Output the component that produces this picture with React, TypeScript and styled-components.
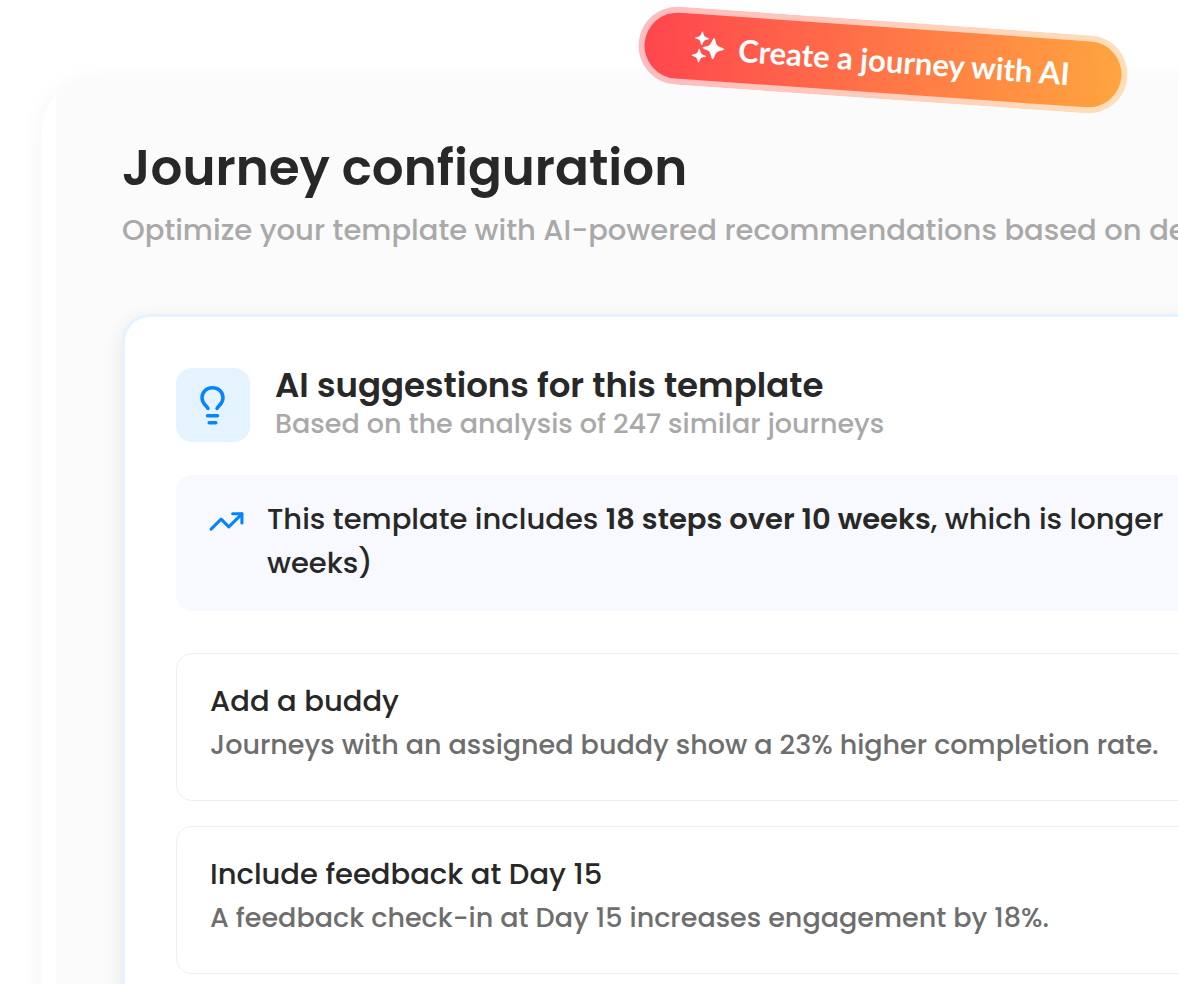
import React from "react";
import styled, { createGlobalStyle } from "styled-components";
import { TrendingUp } from "lucide-react";

const GlobalStyle = createGlobalStyle`
  *, *::before, *::after { box-sizing: border-box; }
  body {
    margin: 0;
    background: #ffffff;
    color: #282828;
    font-family: Poppins, Inter, sans-serif;
  }
  h1, h2, h3, p, ul { margin: 0; padding: 0; }
`;

const Page = styled.div`
  position: relative;
  height: 100vh;
  overflow: hidden;
  padding: 76px 0 0 42px;
`;

const Panel = styled.main`
  min-height: 100%;
  margin-right: -60px;
  padding-left: 14px;
  border-radius: 56px 0 0 0;
  background: linear-gradient(to right, #ffffff 14px, #fbfbfb 14px);
  box-shadow: 0 6px 28px rgba(0, 0, 0, 0.05);
`;

const Content = styled.div`
  padding: 59px 0 0 66px;
  white-space: nowrap;
`;

const Title = styled.h1`
  font-size: 50px;
  line-height: 66px;
  font-weight: 600;
`;

const Subtitle = styled.p`
  margin-top: 7px;
  font-size: 29px;
  line-height: 44px;
  font-weight: 500;
  color: #a9a9a9;
`;

const Card = styled.section`
  margin-top: 62px;
  padding: 51px 0 60px 51px;
  border: 3px solid #e4f3ff;
  border-radius: 28px;
  background: #ffffff;
  box-shadow: 0 6px 20px rgba(0, 0, 0, 0.09);
`;

const CardHeader = styled.header`
  display: flex;
  align-items: flex-start;
  gap: 25px;
`;

const IconTile = styled.div`
  display: flex;
  align-items: center;
  justify-content: center;
  width: 74px;
  height: 74px;
  border-radius: 16px;
  background: #e4f3ff;
  color: #0584fe;
`;

const CardTitle = styled.h2`
  font-size: 34px;
  line-height: 34px;
  font-weight: 600;
`;

const CardSubtitle = styled.p`
  font-size: 27px;
  line-height: 44px;
  font-weight: 500;
  color: #a9a9a9;
`;

const Callout = styled.div`
  display: flex;
  gap: 22px;
  margin-top: 29px;
  padding: 22px 0 26px 32px;
  border-radius: 16px 0 0 16px;
  background: #f7f9fe;
`;

const TrendIcon = styled(TrendingUp)`
  flex: none;
  margin-top: 6px;
  color: #0584fe;
`;

const CalloutText = styled.p`
  font-size: 29px;
  line-height: 44px;
  font-weight: 500;

  strong { font-weight: 600; }
`;

const Suggestions = styled.ul`
  display: flex;
  flex-direction: column;
  gap: 25px;
  margin-top: 42px;
  list-style: none;
`;

const Suggestion = styled.li`
  padding: 25px 0 33px 33px;
  border: 1px solid #efefef;
  border-radius: 16px;
`;

const SuggestionTitle = styled.h3`
  font-size: 29px;
  line-height: 44px;
  font-weight: 500;
`;

const SuggestionText = styled.p`
  font-size: 27px;
  line-height: 44px;
  font-weight: 500;
  color: #6e6e6e;
`;

const CreateButton = styled.button`
  position: absolute;
  top: 21px;
  right: 50px;
  display: flex;
  align-items: center;
  gap: 13px;
  width: 490px;
  height: 78px;
  padding: 0 0 0 47px;
  border: 6px solid rgba(255, 255, 255, 0.64);
  border-radius: 39px;
  background: linear-gradient(to right, #ff444f, #ffa63f) border-box;
  color: #ffffff;
  font-family: Lato, sans-serif;
  font-size: 31px;
  font-weight: 700;
  white-space: nowrap;
  transform: rotate(4deg);
`;

const suggestions = [
  { title: "Add a buddy", text: "Journeys with an assigned buddy show a 23% higher completion rate." },
  { title: "Include feedback at Day 15", text: "A feedback check-in at Day 15 increases engagement by 18%." },
];

const Sparkles = () => (
  <svg width="34" height="34" viewBox="0 0 34 34" fill="currentColor" aria-hidden="true">
    <path d="M22 6.500Q23.500 8 24 11Q25 14.500 28.500 15.500Q32 16.200 33 17.300Q32 18.500 28.500 19.300Q25 20.300 24 24Q23.500 27 22 28.500Q20.500 27 19.800 24Q18.800 20.300 15.500 19.300Q12 18.500 11 17.300Q12 16.200 15.500 15.500Q18.800 14.500 19.800 11Q20.500 8 22 6.500Z" />
    <path d="M10 .8Q11 2 11.300 4Q12 6.200 14 6.700Q16.500 7.200 17.300 8Q16.500 8.800 14 9.300Q12 9.900 11.300 12Q11 14 10 15.200Q9 14 8.700 12Q8 9.900 6 9.300Q3.500 8.800 2.700 8Q3.500 7.200 6 6.700Q8 6.200 8.700 4Q9 2 10 .8Z" />
    <path d="M8 18.300Q9 19.500 9.300 21.500Q10 23.700 12 24.200Q14.500 24.700 15.300 25.500Q14.500 26.300 12 26.800Q10 27.400 9.300 29.500Q9 31.500 8 32.700Q7 31.500 6.700 29.500Q6 27.400 4 26.800Q1.500 26.300 .7 25.500Q1.500 24.700 4 24.200Q6 23.700 6.700 21.500Q7 19.500 8 18.300Z" />
  </svg>
);

const Bulb = () => (
  <svg width="42" height="42" viewBox="0 0 42 42" fill="none" stroke="currentColor" strokeWidth="3.500" strokeLinecap="round" strokeLinejoin="round" aria-hidden="true">
    <path d="M16 24.500C14 21 10 19.500 10 13.700C10 7.800 14.800 3.700 20.500 3.700S31 7.800 31 13.700C31 19.500 27 21 25 24.500" />
    <path d="M15.500 31.700H25.500M17.200 38.700H23.800" />
  </svg>
);

export default function App() {
  return (
    <>
      <GlobalStyle />
      <Page>
        <Panel>
          <Content>
            <Title>Journey configuration</Title>
            <Subtitle>Optimize your template with AI-powered recommendations based on de</Subtitle>
            <Card>
              <CardHeader>
                <IconTile><Bulb /></IconTile>
                <div>
                  <CardTitle>AI suggestions for this template</CardTitle>
                  <CardSubtitle>Based on the analysis of 247 similar journeys</CardSubtitle>
                </div>
              </CardHeader>
              <Callout>
                <TrendIcon size={37} strokeWidth={2} />
                <CalloutText>
                  This template includes <strong>18 steps over 10 weeks</strong>, which is longer
                  <br />
                  weeks)
                </CalloutText>
              </Callout>
              <Suggestions>
                {suggestions.map((item) => (
                  <Suggestion key={item.title}>
                    <SuggestionTitle>{item.title}</SuggestionTitle>
                    <SuggestionText>{item.text}</SuggestionText>
                  </Suggestion>
                ))}
              </Suggestions>
            </Card>
          </Content>
        </Panel>
        <CreateButton type="button">
          <Sparkles />
          Create a journey with AI
        </CreateButton>
      </Page>
    </>
  );
}
